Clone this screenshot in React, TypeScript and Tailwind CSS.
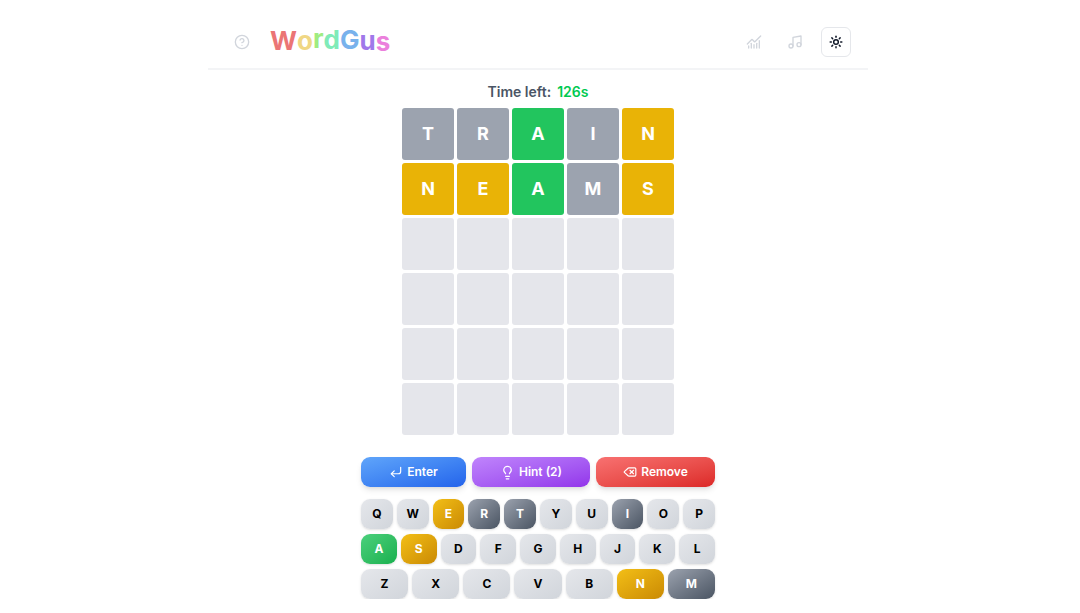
import { ChartNoAxesCombined, CircleHelp, CornerDownLeft, Delete, Lightbulb, Music, Sun } from "lucide-react";

type Status = "correct" | "present" | "absent" | "unused";

const titleLetters = [
  { char: "W", style: "text-[#eb7575]" },
  { char: "o", style: "text-[#f0d784]" },
  { char: "r", style: "text-[#a0ec80] -translate-y-0.5" },
  { char: "d", style: "text-[#80ebb8] -translate-y-px" },
  { char: "G", style: "text-[#78b2ec] -translate-y-px" },
  { char: "u", style: "text-[#a078ea]" },
  { char: "s", style: "text-[#eb80dc] translate-y-px" },
];

const tileColors: Record<Status, string> = {
  correct: "bg-[#22c55e]",
  present: "bg-[#e9b306]",
  absent: "bg-[#9ca3af]",
  unused: "bg-[#e5e6eb]",
};

const keyColors: Record<Status, string> = {
  correct: "from-[#4ad07c] to-[#16b04e] text-white",
  present: "from-[#f3bf16] to-[#ca8a04] text-white",
  absent: "from-[#9ca3af] to-[#4b5563] text-white",
  unused: "from-[#e5e7eb] to-[#d1d5db] text-black",
};

const guesses: { word: string; result: Status[] }[] = [
  { word: "TRAIN", result: ["absent", "absent", "correct", "absent", "present"] },
  { word: "NEAMS", result: ["present", "present", "correct", "absent", "present"] },
  { word: "     ", result: ["unused", "unused", "unused", "unused", "unused"] },
  { word: "     ", result: ["unused", "unused", "unused", "unused", "unused"] },
  { word: "     ", result: ["unused", "unused", "unused", "unused", "unused"] },
  { word: "     ", result: ["unused", "unused", "unused", "unused", "unused"] },
];

const keyStatus: Record<string, Status> = {
  A: "correct",
  E: "present",
  S: "present",
  N: "present",
  R: "absent",
  T: "absent",
  I: "absent",
  M: "absent",
};

const keyRows = ["QWERTYUIOP", "ASDFGHJKL", "ZXCVBNM"];

function Header() {
  return (
    <header className="flex h-[70px] items-center justify-between border-b-2 border-gray-100 pt-4 pr-[17px] pl-[26px]">
      <div className="flex items-center gap-5">
        <button type="button" aria-label="Help" className="flex size-4 items-center justify-center text-gray-300">
          <CircleHelp size={16} />
        </button>
        <h1 aria-label="WordGus" className="flex pb-0.5 text-[26px] leading-8 font-bold">
          {titleLetters.map(({ char, style }) => (
            <span key={char} className={style}>
              {char}
            </span>
          ))}
        </h1>
      </div>
      <nav className="flex items-center gap-[11px]">
        <button type="button" aria-label="Statistics" className="flex size-[30px] items-center justify-center text-gray-300">
          <ChartNoAxesCombined size={16} />
        </button>
        <button type="button" aria-label="Music" className="flex size-[30px] items-center justify-center text-gray-300">
          <Music size={16} />
        </button>
        <button
          type="button"
          aria-label="Toggle theme"
          className="flex size-[30px] items-center justify-center rounded-md border border-gray-200 text-gray-900"
        >
          <Sun size={14} strokeWidth={2.5} />
        </button>
      </nav>
    </header>
  );
}

function Board() {
  return (
    <div className="grid grid-cols-5 gap-[3px]">
      {guesses.map(({ word, result }, row) =>
        result.map((status, col) => (
          <div
            key={`${row}-${col}`}
            className={`flex size-[52px] items-center justify-center rounded-[3px] text-lg font-bold text-white ${tileColors[status]}`}
          >
            {word[col].trim()}
          </div>
        )),
      )}
    </div>
  );
}

const actionClass =
  "flex h-[30px] items-center justify-center gap-1 rounded-[9px] bg-linear-to-br text-xs font-semibold text-white shadow-md";

function Keyboard() {
  return (
    <div className="w-full max-w-[354px]">
      <div className="mb-3 grid grid-cols-[105fr_118fr_119fr] gap-1.5">
        <button type="button" className={`${actionClass} from-[#60a5fa] to-[#2563eb]`}>
          <CornerDownLeft size={14} />
          Enter
        </button>
        <button type="button" className={`${actionClass} from-[#c084fc] to-[#9333ea]`}>
          <Lightbulb size={15} />
          Hint (2)
        </button>
        <button type="button" className={`${actionClass} from-[#f87171] to-[#dc2626]`}>
          <Delete size={14} />
          Remove
        </button>
      </div>
      <div className="flex flex-col gap-[5px]">
        {keyRows.map((row) => (
          <div key={row} className="flex gap-1">
            {row.split("").map((letter) => (
              <button
                key={letter}
                type="button"
                className={`h-[30px] min-w-0 flex-1 rounded-[9px] bg-linear-to-br text-xs font-bold shadow ${keyColors[keyStatus[letter] ?? "unused"]}`}
              >
                {letter}
              </button>
            ))}
          </div>
        ))}
      </div>
    </div>
  );
}

export default function App() {
  return (
    <div className="bg-white pr-1 font-['Inter',sans-serif]">
      <div className="mx-auto max-w-[660px]">
        <Header />
        <main className="flex flex-col items-center pt-3">
          <p className="mb-[6px] flex gap-1.5 text-[14px] leading-5 font-semibold text-gray-600">
            Time left: <span className="text-green-500">126s</span>
          </p>
          <Board />
          <div className="mt-[22px] flex w-full justify-center">
            <Keyboard />
          </div>
        </main>
      </div>
    </div>
  );
}
